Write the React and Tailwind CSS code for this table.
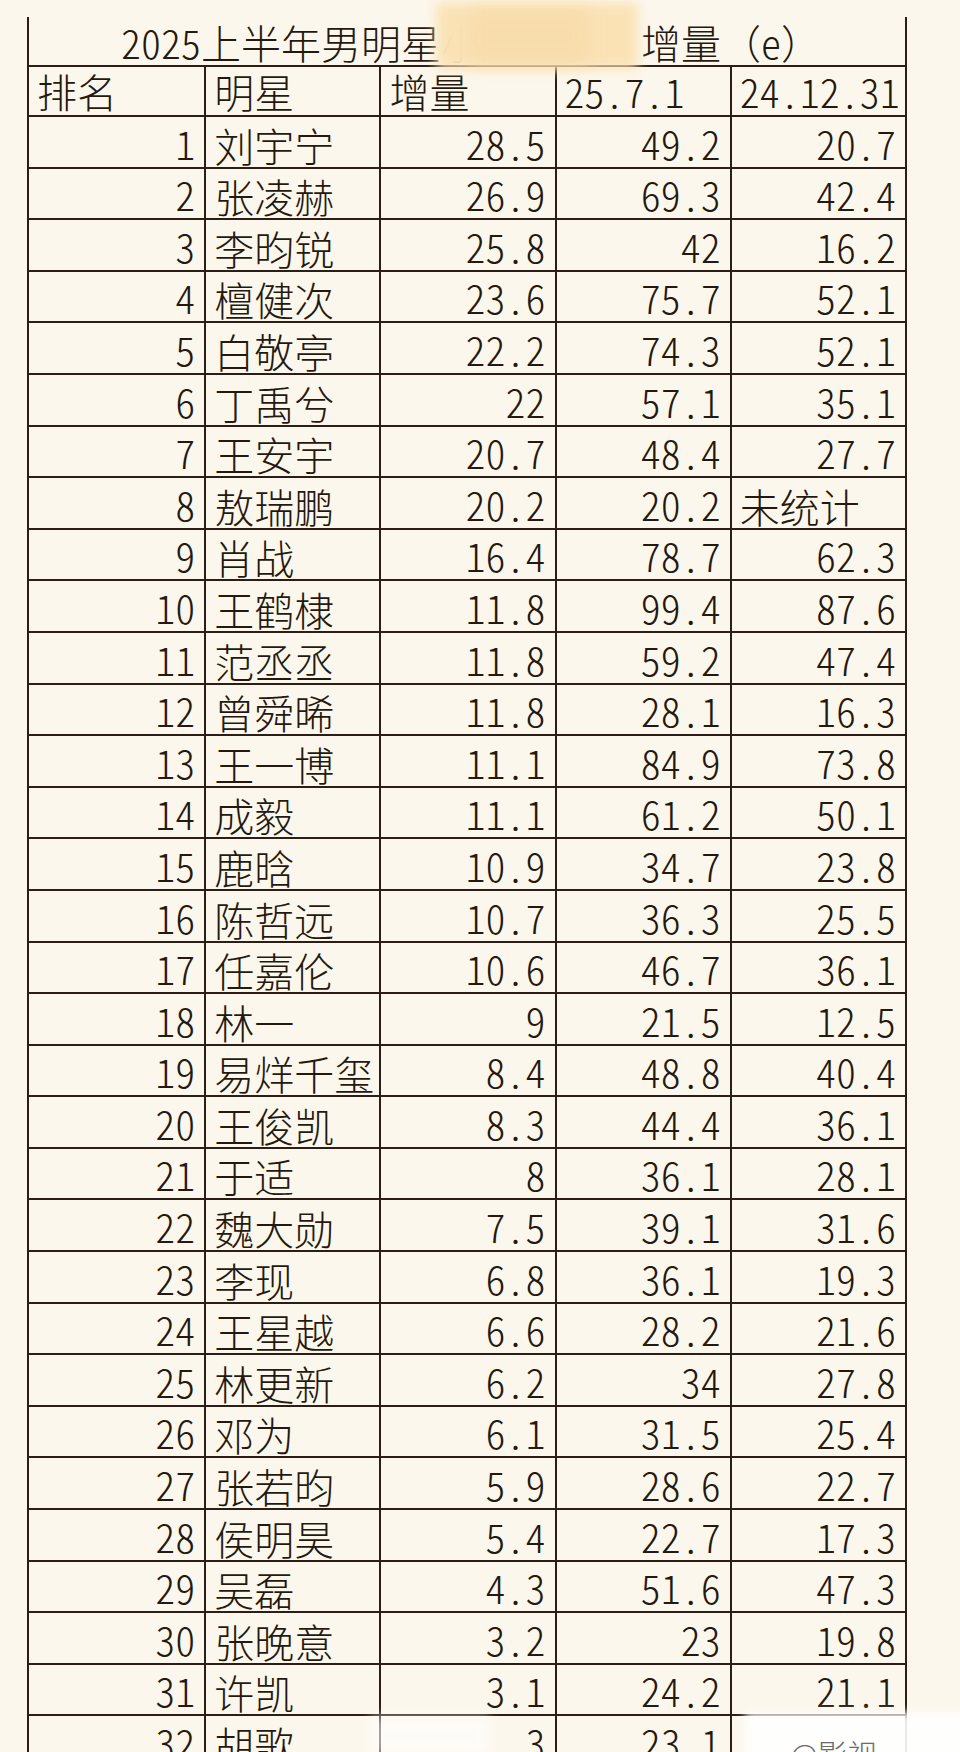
import React from "react";

const rows = [
  [1, "刘宇宁", "28.5", "49.2", "20.7"],
  [2, "张凌赫", "26.9", "69.3", "42.4"],
  [3, "李昀锐", "25.8", "42", "16.2"],
  [4, "檀健次", "23.6", "75.7", "52.1"],
  [5, "白敬亭", "22.2", "74.3", "52.1"],
  [6, "丁禹兮", "22", "57.1", "35.1"],
  [7, "王安宇", "20.7", "48.4", "27.7"],
  [8, "敖瑞鹏", "20.2", "20.2", "未统计"],
  [9, "肖战", "16.4", "78.7", "62.3"],
  [10, "王鹤棣", "11.8", "99.4", "87.6"],
  [11, "范丞丞", "11.8", "59.2", "47.4"],
  [12, "曾舜晞", "11.8", "28.1", "16.3"],
  [13, "王一博", "11.1", "84.9", "73.8"],
  [14, "成毅", "11.1", "61.2", "50.1"],
  [15, "鹿晗", "10.9", "34.7", "23.8"],
  [16, "陈哲远", "10.7", "36.3", "25.5"],
  [17, "任嘉伦", "10.6", "46.7", "36.1"],
  [18, "林一", "9", "21.5", "12.5"],
  [19, "易烊千玺", "8.4", "48.8", "40.4"],
  [20, "王俊凯", "8.3", "44.4", "36.1"],
  [21, "于适", "8", "36.1", "28.1"],
  [22, "魏大勋", "7.5", "39.1", "31.6"],
  [23, "李现", "6.8", "36.1", "19.3"],
  [24, "王星越", "6.6", "28.2", "21.6"],
  [25, "林更新", "6.2", "34", "27.8"],
  [26, "邓为", "6.1", "31.5", "25.4"],
  [27, "张若昀", "5.9", "28.6", "22.7"],
  [28, "侯明昊", "5.4", "22.7", "17.3"],
  [29, "吴磊", "4.3", "51.6", "47.3"],
  [30, "张晚意", "3.2", "23", "19.8"],
  [31, "许凯", "3.1", "24.2", "21.1"],
  [32, "胡歌", "3", "23.1", ""],
];

function NumCell({ children, first }) {
  return (
    <div
      className={
        "flex items-end justify-end pr-[9px] pb-[4px] whitespace-nowrap " +
        (first ? "" : "border-l-2 border-[#2a1e16]")
      }
    >
      {children}
    </div>
  );
}

function TextCell({ children, first, head }) {
  return (
    <div
      className={
        "flex items-end justify-start pl-[8px] whitespace-nowrap " +
        (head ? "pb-[4px] " : "pb-[2px] ") +
        (first ? "" : "border-l-2 border-[#2a1e16]")
      }
    >
      {children}
    </div>
  );
}

export default function App() {
  return (
    <div className="relative w-[960px] h-[1752px] overflow-hidden bg-[#fcf7ec] pt-[17px] pl-[27px] text-[#24190f] font-['Noto_Sans_CJK_SC','Noto_Sans_CJK_JP',sans-serif] font-light [font-feature-settings:'hwid'] text-[40px] leading-[40px]">
      <div className="w-[880px] border-l-2 border-r-2 border-[#2a1e16]">
        {/* title */}
        <div className="h-[50px] border-b-2 border-[#2a1e16] flex items-end justify-center pb-[3px] pl-[8px] whitespace-nowrap">
          <span>2025</span>
          <span>上半年男明星</span>
          <span className="opacity-30">小</span>
          <span className="inline-block w-[160px]"></span>
          <span>增量</span>
          <span className="[font-feature-settings:normal]">（</span>
          <span>e</span>
          <span className="[font-feature-settings:normal]">）</span>
        </div>
        {/* header */}
        <div className="h-[50px] border-b-2 border-[#2a1e16] grid grid-cols-5">
          <TextCell first head>排名</TextCell>
          <TextCell head>明星</TextCell>
          <TextCell head>增量</TextCell>
          <TextCell head>25.7.1</TextCell>
          <TextCell head>24.12.31</TextCell>
        </div>
        {rows.map((r) => (
          <div
            key={r[0]}
            className="h-[51.6px] border-b-2 border-[#2a1e16] grid grid-cols-5"
          >
            <NumCell first>{r[0]}</NumCell>
            <TextCell>{r[1]}</TextCell>
            <NumCell>{r[2]}</NumCell>
            <NumCell>{r[3]}</NumCell>
            {r[4] === "未统计" ? (
              <TextCell>{r[4]}</TextCell>
            ) : (
              <NumCell>{r[4]}</NumCell>
            )}
          </div>
        ))}
      </div>

      {/* blurred censor patch in title */}
      <div className="absolute left-[436px] top-[3px] w-[202px] h-[66px] bg-[#fae1b3] opacity-95 blur-[6px]"></div>
      <div className="absolute left-[470px] top-[8px] w-[120px] h-[56px] bg-[#f8dcaa] opacity-80 blur-[8px]"></div>

      {/* watermarks */}
      <div className="absolute left-[370px] top-[1716px] w-[120px] h-[40px] bg-white opacity-60 blur-[6px]"></div>
      <div className="absolute left-[745px] top-[1712px] w-[230px] h-[50px] bg-white opacity-90 blur-[4px]"></div>
      <div className="absolute left-[790px] top-[1738px] text-[30px] leading-[30px] text-[#6b6b6b] whitespace-nowrap [font-feature-settings:normal]">
        @影视
      </div>
    </div>
  );
}
